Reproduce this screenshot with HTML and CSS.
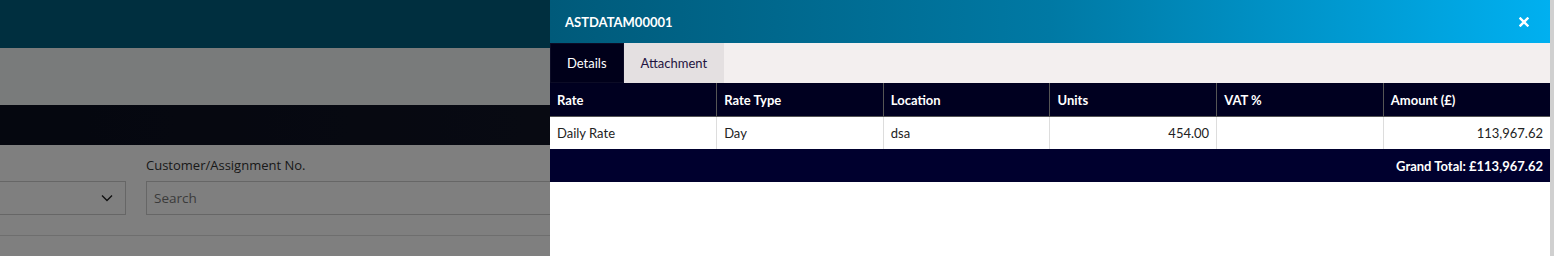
FILE: index.html
```html
<!DOCTYPE html>
<html lang="en">
<head>
    <meta charset="UTF-8">
    <meta name="viewport" content="width=device-width, initial-scale=1.0">
    <title>Assignment Details</title>
    <link rel="stylesheet" href="styles.css">
</head>
<body>
    <div class="page">
        <header class="top-bar"></header>
        <div class="sub-bar"></div>
        <div class="nav-bar"></div>
        <div class="filters">
            <div class="field field-select">
                <div class="select-box">
                    <svg class="chevron" width="12" height="8" viewBox="0 0 12 8"><path d="M1 1.5l5 5 5-5" fill="none" stroke="#222" stroke-width="1.4"/></svg>
                </div>
            </div>
            <div class="field field-search">
                <label>Customer/Assignment No.</label>
                <input type="text" placeholder="Search">
            </div>
        </div>
        <div class="divider"></div>
    </div>

    <div class="backdrop"></div>

    <aside class="drawer">
        <div class="drawer-head">
            <span class="drawer-title">ASTDATAM00001</span>
            <svg class="close" width="10" height="10" viewBox="0 0 10 10"><path d="M1.5 1.5l7 7M8.5 1.5l-7 7" stroke="#fff" stroke-width="2.4" stroke-linecap="square"/></svg>
        </div>
        <div class="tabs">
            <div class="tab active">Details</div>
            <div class="tab">Attachment</div>
        </div>
        <table class="rates">
            <thead>
                <tr>
                    <th>Rate</th>
                    <th>Rate Type</th>
                    <th>Location</th>
                    <th>Units</th>
                    <th>VAT %</th>
                    <th>Amount (£)</th>
                </tr>
            </thead>
            <tbody>
                <tr>
                    <td>Daily Rate</td>
                    <td>Day</td>
                    <td>dsa</td>
                    <td class="num">454.00</td>
                    <td></td>
                    <td class="num">113,967.62</td>
                </tr>
            </tbody>
            <tfoot>
                <tr>
                    <td colspan="6">Grand Total: £113,967.62</td>
                </tr>
            </tfoot>
        </table>
    </aside>
</body>
</html>
```

FILE: styles.css
```css
body {
    margin: 0;
    font-family: 'Open Sans', 'Noto Sans', sans-serif;
    background-color: #fff;
    overflow: hidden;
}
.page {
    width: 100%;
}
.top-bar {
    height: 48px;
    background-color: #005e7e;
}
.sub-bar {
    height: 57px;
    background-color: #f2f6f6;
}
.nav-bar {
    height: 40px;
    background: linear-gradient(to right, #0a0e1e, #1a1e30 90%);
}
.filters {
    display: flex;
    gap: 20px;
    padding-top: 12px;
    margin-left: -31px;
}
.field {
    display: flex;
    flex-direction: column;
}
.field label {
    font-size: 13px;
    color: #333;
    height: 24px;
    line-height: 17px;
}
.field-select {
    padding-top: 24px;
}
.select-box {
    width: 143px;
    height: 32px;
    border: 1px solid #ccc;
    display: flex;
    align-items: center;
    justify-content: flex-end;
    padding-right: 12px;
    background-color: #fff;
}
.field-search input {
    width: 420px;
    height: 34px;
    box-sizing: border-box;
    border: 1px solid #ccc;
    padding: 0 7px;
    font-family: 'Open Sans', sans-serif;
    font-size: 13.5px;
    background-color: #fff;
    margin: 0;
}
.field-search input::placeholder {
    color: #777;
}
.divider {
    margin-top: 20px;
    border-top: 1px solid #ddd;
}
.backdrop {
    position: fixed;
    inset: 0;
    background-color: rgba(0,0,0,0.5);
}
.drawer {
    position: fixed;
    top: 0;
    right: 0;
    bottom: 0;
    width: 1000px;
    background-color: #fff;
    border-right: 4px solid #d0d0d0;
    font-family: 'Lato', 'Open Sans', sans-serif;
    font-size: 13px;
}
.drawer-head {
    height: 43px;
    display: flex;
    align-items: center;
    justify-content: space-between;
    padding: 0 21px 0 15px;
    background: linear-gradient(to right, #005a7a, #0079a4 50%, #00b0f0);
    color: #fff;
}
.drawer-title {
    font-weight: bold;
    font-size: 13px;
}
.tabs {
    display: flex;
    height: 40px;
    background-color: #f3efef;
}
.tab {
    display: flex;
    align-items: center;
    padding: 0 17px;
    background-color: #e4e0e1;
    color: #1f1440;
}
.tab.active {
    background-color: #00001a;
    color: #fff;
    box-shadow: inset 0 0 0 1px #0c0c26, inset 0 0 0 2px #00001a;
}
.rates {
    width: 100%;
    border-collapse: collapse;
    table-layout: fixed;
}
.rates th, .rates td {
    padding: 0 7px;
    text-align: left;
}
.rates th {
    height: 33px;
    background-color: #000020;
    color: #fff;
    font-weight: bold;
    border-left: 1px solid #555;
    border-bottom: 1px solid #555;
}
.rates tbody td {
    height: 32px;
    color: #222;
    border-left: 1px solid #ddd;
}
.rates th:first-child, .rates tbody td:first-child {
    border-left: none;
}
.rates td.num {
    text-align: right;
}
.rates tfoot td {
    height: 33px;
    background-color: #00002e;
    color: #fff;
    font-weight: bold;
    text-align: right;
}
```
